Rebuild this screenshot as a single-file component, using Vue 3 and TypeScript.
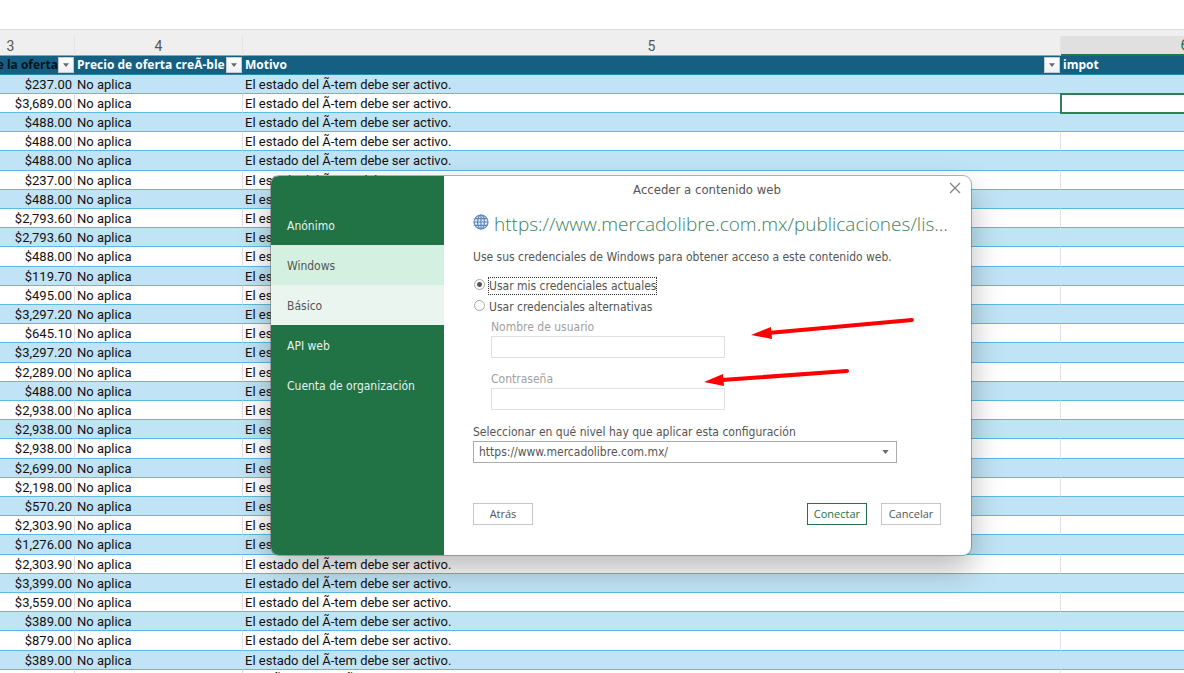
<script setup lang="ts">
import { ref } from 'vue'

const prices: string[] = [
  '$237.00', '$3,689.00', '$488.00', '$488.00', '$488.00', '$237.00', '$488.00',
  '$2,793.60', '$2,793.60', '$488.00', '$119.70', '$495.00', '$3,297.20', '$645.10',
  '$3,297.20', '$2,289.00', '$488.00', '$2,938.00', '$2,938.00', '$2,938.00',
  '$2,699.00', '$2,198.00', '$570.20', '$2,303.90', '$1,276.00', '$2,303.90',
  '$3,399.00', '$3,559.00', '$389.00', '$879.00', '$389.00',
]

const methods: { id: string; label: string; tone: string }[] = [
  { id: 'anon', label: 'Anónimo', tone: 'plain' },
  { id: 'windows', label: 'Windows', tone: 'active' },
  { id: 'basic', label: 'Básico', tone: 'hover' },
  { id: 'api', label: 'API web', tone: 'plain' },
  { id: 'org', label: 'Cuenta de organización', tone: 'plain' },
]

const mode = ref<string>('current')
const level = ref<string>('https://www.mercadolibre.com.mx/')
</script>

<template>
  <main class="app">
    <div class="ribbon"></div>
    <div class="sheet">
      <table class="grid">
        <colgroup>
          <col class="c3" />
          <col class="c4" />
          <col class="c5" />
          <col class="c6" />
        </colgroup>
        <thead>
          <tr class="numbers">
            <th scope="col">3</th>
            <th scope="col">4</th>
            <th scope="col">5</th>
            <th scope="col" class="selected">6</th>
          </tr>
          <tr class="titles">
            <th scope="col" class="dark">
              <div class="head end">
                <span>e la oferta</span>
                <button class="filter" type="button" aria-label="Filtrar">
                  <svg viewBox="0 0 8 5" width="6" height="4"><path d="M0 0h8L4 5z" /></svg>
                </button>
              </div>
            </th>
            <th scope="col">
              <div class="head">
                <span>Precio de oferta creÃ-ble</span>
                <button class="filter" type="button" aria-label="Filtrar">
                  <svg viewBox="0 0 8 5" width="6" height="4"><path d="M0 0h8L4 5z" /></svg>
                </button>
              </div>
            </th>
            <th scope="col">
              <div class="head">
                <span>Motivo</span>
                <button class="filter" type="button" aria-label="Filtrar">
                  <svg viewBox="0 0 8 5" width="6" height="4"><path d="M0 0h8L4 5z" /></svg>
                </button>
              </div>
            </th>
            <th scope="col"><div class="head"><span>impot</span></div></th>
          </tr>
        </thead>
        <tbody>
          <tr v-for="(price, i) in prices" :key="i">
            <td class="price">{{ price }}</td>
            <td>No aplica</td>
            <td>El estado del Ã-tem debe ser activo.</td>
            <td :class="{ cursor: i === 1 }"></td>
          </tr>
          <tr>
            <td></td>
            <td></td>
            <td><div class="partial"><span>Ã</span><span>Ã</span></div></td>
            <td></td>
          </tr>
        </tbody>
      </table>
    </div>

    <section class="dialog" role="dialog" aria-labelledby="dialog-title">
      <nav class="methods">
        <button v-for="m in methods" :key="m.id" type="button" :class="['method', m.tone]">{{ m.label }}</button>
      </nav>
      <form class="panel" @submit.prevent>
        <header class="bar">
          <h1 id="dialog-title">Acceder a contenido web</h1>
          <button class="close" type="button" aria-label="Cerrar">
            <svg viewBox="0 0 12 12" width="12" height="12"><path d="M1 1l10 10M11 1L1 11" /></svg>
          </button>
        </header>

        <div class="address">
          <svg class="globe" viewBox="0 0 16 16" width="16" height="16">
            <circle cx="8" cy="8" r="7" />
            <ellipse cx="8" cy="8" rx="3.4" ry="7" />
            <path d="M8 1v14M1 8h14M2 4.6h12M2 11.4h12" />
          </svg>
          <h2>https://www.mercadolibre.com.mx/publicaciones/lis...</h2>
        </div>

        <p class="intro">Use sus credenciales de Windows para obtener acceso a este contenido web.</p>

        <div class="options">
          <div class="option">
            <input id="current" v-model="mode" type="radio" name="mode" value="current" />
            <label for="current" class="focused">Usar mis credenciales actuales</label>
          </div>
          <div class="option">
            <input id="other" v-model="mode" type="radio" name="mode" value="other" />
            <label for="other">Usar credenciales alternativas</label>
          </div>
        </div>

        <div class="fields">
          <div class="field">
            <label for="user">Nombre de usuario</label>
            <input id="user" type="text" disabled />
          </div>
          <div class="field">
            <label for="pass">Contraseña</label>
            <input id="pass" type="password" disabled />
          </div>
        </div>

        <div class="level">
          <label for="level">Seleccionar en qué nivel hay que aplicar esta configuración</label>
          <div class="picker">
            <select id="level" v-model="level">
              <option>https://www.mercadolibre.com.mx/</option>
            </select>
            <svg viewBox="0 0 8 5" width="7" height="4"><path d="M0 0h8L4 5z" /></svg>
          </div>
        </div>

        <footer class="actions">
          <button type="button">Atrás</button>
          <span class="spacer"></span>
          <button type="submit" class="primary">Conectar</button>
          <button type="button">Cancelar</button>
        </footer>
      </form>

      <svg class="marks" viewBox="0 0 220 80" width="220" height="80" aria-hidden="true">
        <path class="shaft" d="M66 19L210 6" />
        <path class="tip" d="M49 21L69 13L70 25z" />
        <path class="shaft" d="M20 66L145 57" />
        <path class="tip" d="M2 68L21 60L22 72z" />
      </svg>
    </section>
  </main>
</template>

<style>
body {
  margin: 0;
  background: #fff;
}
</style>

<style scoped>
* {
  box-sizing: border-box;
}

.app {
  position: relative;
  height: 100vh;
  overflow: hidden;
  background: #fff;
}

button,
input,
select {
  margin: 0;
  font: inherit;
  color: inherit;
}

.ribbon {
  height: 29px;
  background: #fff;
}

.sheet {
  padding-top: 6px;
  border-top: 1px solid #dcdcdc;
  background: linear-gradient(#efefef 6px, #fff 6px);
}

.grid {
  width: calc(100% + 178px);
  margin-left: -53px;
  table-layout: fixed;
  border-collapse: separate;
  border-spacing: 0;
  font: 13px/16px Roboto, "Liberation Sans", sans-serif;
  color: #111;
}

.c3 {
  width: 128px;
}

.c4 {
  width: 168px;
}

.c6 {
  width: 248px;
}

th,
td {
  padding: 0 2px;
  overflow: hidden;
  white-space: nowrap;
  text-align: left;
}

.numbers th {
  height: 20px;
  border-right: 1px solid #e4e4e4;
  border-bottom: 1px solid #8fa3ab;
  background: #efefef;
  color: #555;
  font-size: 14px;
  font-weight: 400;
  text-align: center;
}

.numbers .selected {
  border-bottom: 2px solid #1e7b45;
  background: #e0e0e0;
  color: #1e6b3c;
}

.titles th {
  height: 19px;
  padding: 0 0 0 2px;
  border-bottom: 1px solid #2a86b0;
  background: #156082;
  color: #fff;
  font: 700 12px/16px "Open Sans", "Noto Sans", sans-serif;
}

.titles .dark {
  color: #06121a;
}

.head {
  display: flex;
  align-items: center;
  justify-content: space-between;
  height: 18px;
}

.head.end {
  justify-content: flex-end;
}

.filter {
  display: flex;
  flex: none;
  align-items: center;
  justify-content: center;
  width: 16px;
  height: 16px;
  margin-right: 1px;
  padding: 0;
  border: 1px solid #c3ccd4;
  background: linear-gradient(#fff, #eef0f5);
}

.filter svg,
.picker svg {
  fill: #6b6b6b;
}

tbody td {
  height: 19px;
  padding-top: 1px;
  border-right: 1px solid #e1e1e1;
  border-bottom: 1px solid #5cb9e3;
}

tbody tr:nth-child(5n) td {
  height: 20px;
}

tbody tr:nth-child(odd) td {
  border-right-color: #c0e4f5;
  background: #c0e4f5;
}

tbody .price {
  text-align: right;
}

tbody .cursor {
  outline: 2px solid #2f7f59;
  outline-offset: -1px;
}

.partial {
  display: flex;
  gap: 64px;
  padding-left: 28px;
}

.dialog {
  position: absolute;
  top: 176px;
  left: 271px;
  display: flex;
  width: 700px;
  border-radius: 8px;
  background: #fff;
  box-shadow: 0 0 0 1px rgba(90, 90, 90, 0.45), 0 14px 32px rgba(0, 0, 0, 0.28);
  color: #555;
  font: 12px/16px "DejaVu Sans Condensed", "Open Sans", sans-serif;
}

.methods {
  display: flex;
  flex: none;
  flex-direction: column;
  width: 173px;
  padding-top: 29px;
  border-radius: 8px 0 0 8px;
  background: #217346;
}

.method {
  height: 40px;
  padding: 1px 16px 0;
  border: 0;
  background: transparent;
  color: #e6f2eb;
  text-align: left;
}

.method.active {
  background: #d3f0e0;
  color: #555;
}

.method.hover {
  background: #e9f5ee;
  color: #555;
}

.panel {
  flex: 1;
  min-width: 0;
  padding: 0 30px 30px 29px;
}

.bar {
  position: relative;
  height: 28px;
}

h1 {
  margin: 0;
  font-size: 13px;
  font-weight: 400;
  line-height: 28px;
  text-align: center;
}

.close {
  position: absolute;
  top: 6px;
  right: -20px;
  display: flex;
  padding: 0;
  border: 0;
  background: none;
}

.close svg {
  fill: none;
  stroke: #808080;
  stroke-width: 1.2;
}

.address {
  display: flex;
  align-items: center;
  gap: 5px;
  height: 28px;
  margin-top: 6px;
}

.globe {
  flex: none;
  margin-bottom: 4px;
  fill: #e3edf8;
  stroke: #5b86b8;
  stroke-width: 1.2;
}

.globe ellipse,
.globe path {
  fill: none;
}

h2 {
  margin: 0;
  color: #3f7f5c;
  font: 300 19px/28px "Open Sans", "Noto Sans", sans-serif;
  white-space: nowrap;
}

.intro {
  margin: 11px 0 12px;
  white-space: nowrap;
}

.options {
  display: flex;
  flex-direction: column;
  gap: 3px;
}

.option {
  display: flex;
  align-items: center;
  gap: 3px;
  height: 18px;
}

.option input {
  flex: none;
  width: 11px;
  height: 11px;
  margin: 0 0 3px 1px;
  border: 1px solid #a8a8a8;
  border-radius: 50%;
  background: #fff;
  appearance: none;
}

.option input:checked {
  background: radial-gradient(circle, #555 2px, #fff 3px);
}

.option label {
  border: 1px solid transparent;
}

.option .focused {
  border: 1px dotted #333;
}

.fields {
  display: flex;
  flex-direction: column;
  gap: 13px;
  margin: 3px 0 14px 18px;
  color: #a0a0a0;
}

.field {
  display: flex;
  flex-direction: column;
  gap: 1px;
  width: 234px;
}

.field input {
  width: 100%;
  height: 22px;
  padding: 0 6px;
  border: 1px solid #e0e0e0;
  background: #fff;
}

.level {
  display: flex;
  flex-direction: column;
  gap: 1px;
}

.picker {
  position: relative;
  width: 424px;
}

.picker select {
  display: block;
  width: 100%;
  height: 22px;
  padding: 0 5px;
  border: 1px solid #ababab;
  border-radius: 0;
  background: #fff;
  appearance: none;
}

.picker svg {
  position: absolute;
  top: 9px;
  right: 8px;
  pointer-events: none;
}

.actions {
  display: flex;
  gap: 14px;
  margin-top: 40px;
}

.spacer {
  flex: 1;
}

.actions button {
  min-width: 60px;
  height: 22px;
  padding: 0 6px;
  border: 1px solid #c6c6c6;
  background: #fff;
  font: 11px/16px "Open Sans", "Noto Sans", sans-serif;
}

.actions .primary {
  border-color: #217346;
  color: #217346;
}

.marks {
  position: absolute;
  top: 138px;
  left: 431px;
  pointer-events: none;
}

.shaft {
  fill: none;
  stroke: #f00;
  stroke-width: 4;
  stroke-linecap: round;
}

.tip {
  fill: #f00;
}
</style>
